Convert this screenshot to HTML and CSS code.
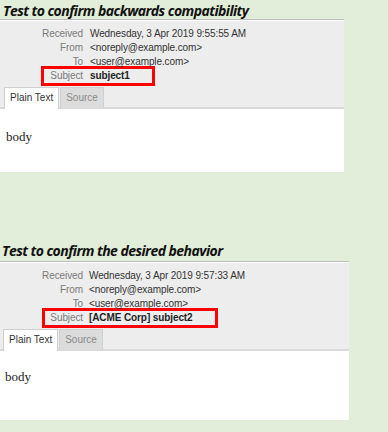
FILE: index.html
```html
<!DOCTYPE html>
<html lang="en">
<head>
	<meta charset="UTF-8">
	<title>Subject tests</title>
	<link rel="stylesheet" href="styles.css">
</head>
<body>
<!-- old behaviour -->
<section class="test">
	<h2 class="test-title">Test to confirm backwards compatibility</h2>
	<div class="mail">
		<div class="mail-header">
			<div class="row"><span class="label">Received</span><span class="value">Wednesday, 3 Apr 2019 9:55:55 AM</span></div>
			<div class="row"><span class="label">From</span><span class="value">&lt;noreply@example.com&gt;</span></div>
			<div class="row"><span class="label">To</span><span class="value">&lt;user@example.com&gt;</span></div>
			<div class="row subject-box">
				<span class="label">Subject</span><span class="value strong">subject1</span>
			</div>
			<div class="tabs">
				<div class="tab active">Plain Text</div>
				<div class="tab">Source</div>
			</div>
		</div>
		<div class="mail-body">body</div>
	</div>
</section>

<!-- new behaviour -->
<section class="test second">
	<h2 class="test-title">Test to confirm the desired behavior</h2>
	<div class="mail">
		<div class="mail-header">
			<div class="row"><span class="label">Received</span><span class="value">Wednesday, 3 Apr 2019 9:57:33 AM</span></div>
			<div class="row"><span class="label">From</span><span class="value">&lt;noreply@example.com&gt;</span></div>
			<div class="row"><span class="label">To</span><span class="value">&lt;user@example.com&gt;</span></div>
			<div class="row subject-box">
				<span class="label">Subject</span><span class="value strong">[ACME Corp] subject2</span>
			</div>
			<div class="tabs">
				<div class="tab active">Plain Text</div>
				<div class="tab">Source</div>
			</div>
		</div>
		<div class="mail-body">body</div>
	</div>
</section>
</body>
</html>
```

FILE: styles.css
```css
body {
	margin: 0;
	background-color: #e2eed9;
	font-family: "Liberation Sans", Arial, sans-serif;
}
.test {
	width: 344px;
}
.test.second {
	width: 349px;
	margin-top: 67px;
}
.test-title {
	margin: 0;
	padding: 2px 0 0 3px;
	height: 17px;
	font-family: "Open Sans", sans-serif;
	font-size: 14px;
	font-weight: bold;
	font-style: italic;
	line-height: 17px;
	letter-spacing: -0.55px;
	color: #111;
}
.second .test-title {
	padding: 3px 0 0 2px;
	height: 19px;
}
.mail {
	border-top: 1px solid #bdbdbd;
	background-color: #fff;
	padding-top: 1px;
}
.mail-header {
	background-color: #ededed;
	padding-top: 6px;
	border-bottom: 2px solid #d9d9d9;
	font-size: 10px;
	letter-spacing: -0.1px;
}
.row {
	display: flex;
	height: 14px;
	line-height: 14px;
}
.label {
	width: 83px;
	text-align: right;
	color: #7a7a7a;
	flex-shrink: 0;
}
.value {
	margin-left: 7px;
	color: #333;
	white-space: nowrap;
}
.second .value {
	margin-left: 6px;
}
.strong {
	font-weight: bold;
	color: #222;
}
/* red annotation box round the subject row */
.subject-box {
	width: 108px;
	margin: -3px 0 -3px 41px;
	border: 3px solid #ff0000;
}
.subject-box .label {
	width: 39px;
}
.second .subject-box {
	width: 170px;
	margin-left: 42px;
}
.second .subject-box .label {
	width: 38px;
}
.tabs {
	display: flex;
	margin: 4px 0 -2px 4px;
	gap: 1px;
}
.second .tabs {
	margin-left: 3px;
}
.tab {
	height: 20px;
	line-height: 20px;
	padding: 0 5px;
	border: 1px solid #cfcfcf;
	border-bottom: none;
	background-color: #dcdcdc;
	color: #8a8a8a;
	font-size: 10px;
	letter-spacing: 0;
}
.tab.active {
	background-color: #fff;
	color: #333;
	height: 21px;
}
.mail-body {
	height: 63px;
	padding: 20px 6px 0;
	box-sizing: border-box;
	font-family: "Liberation Serif", serif;
	font-size: 13px;
	color: #222;
}
.second .mail-body {
	height: 69px;
	padding: 18px 5px 0;
}
```
